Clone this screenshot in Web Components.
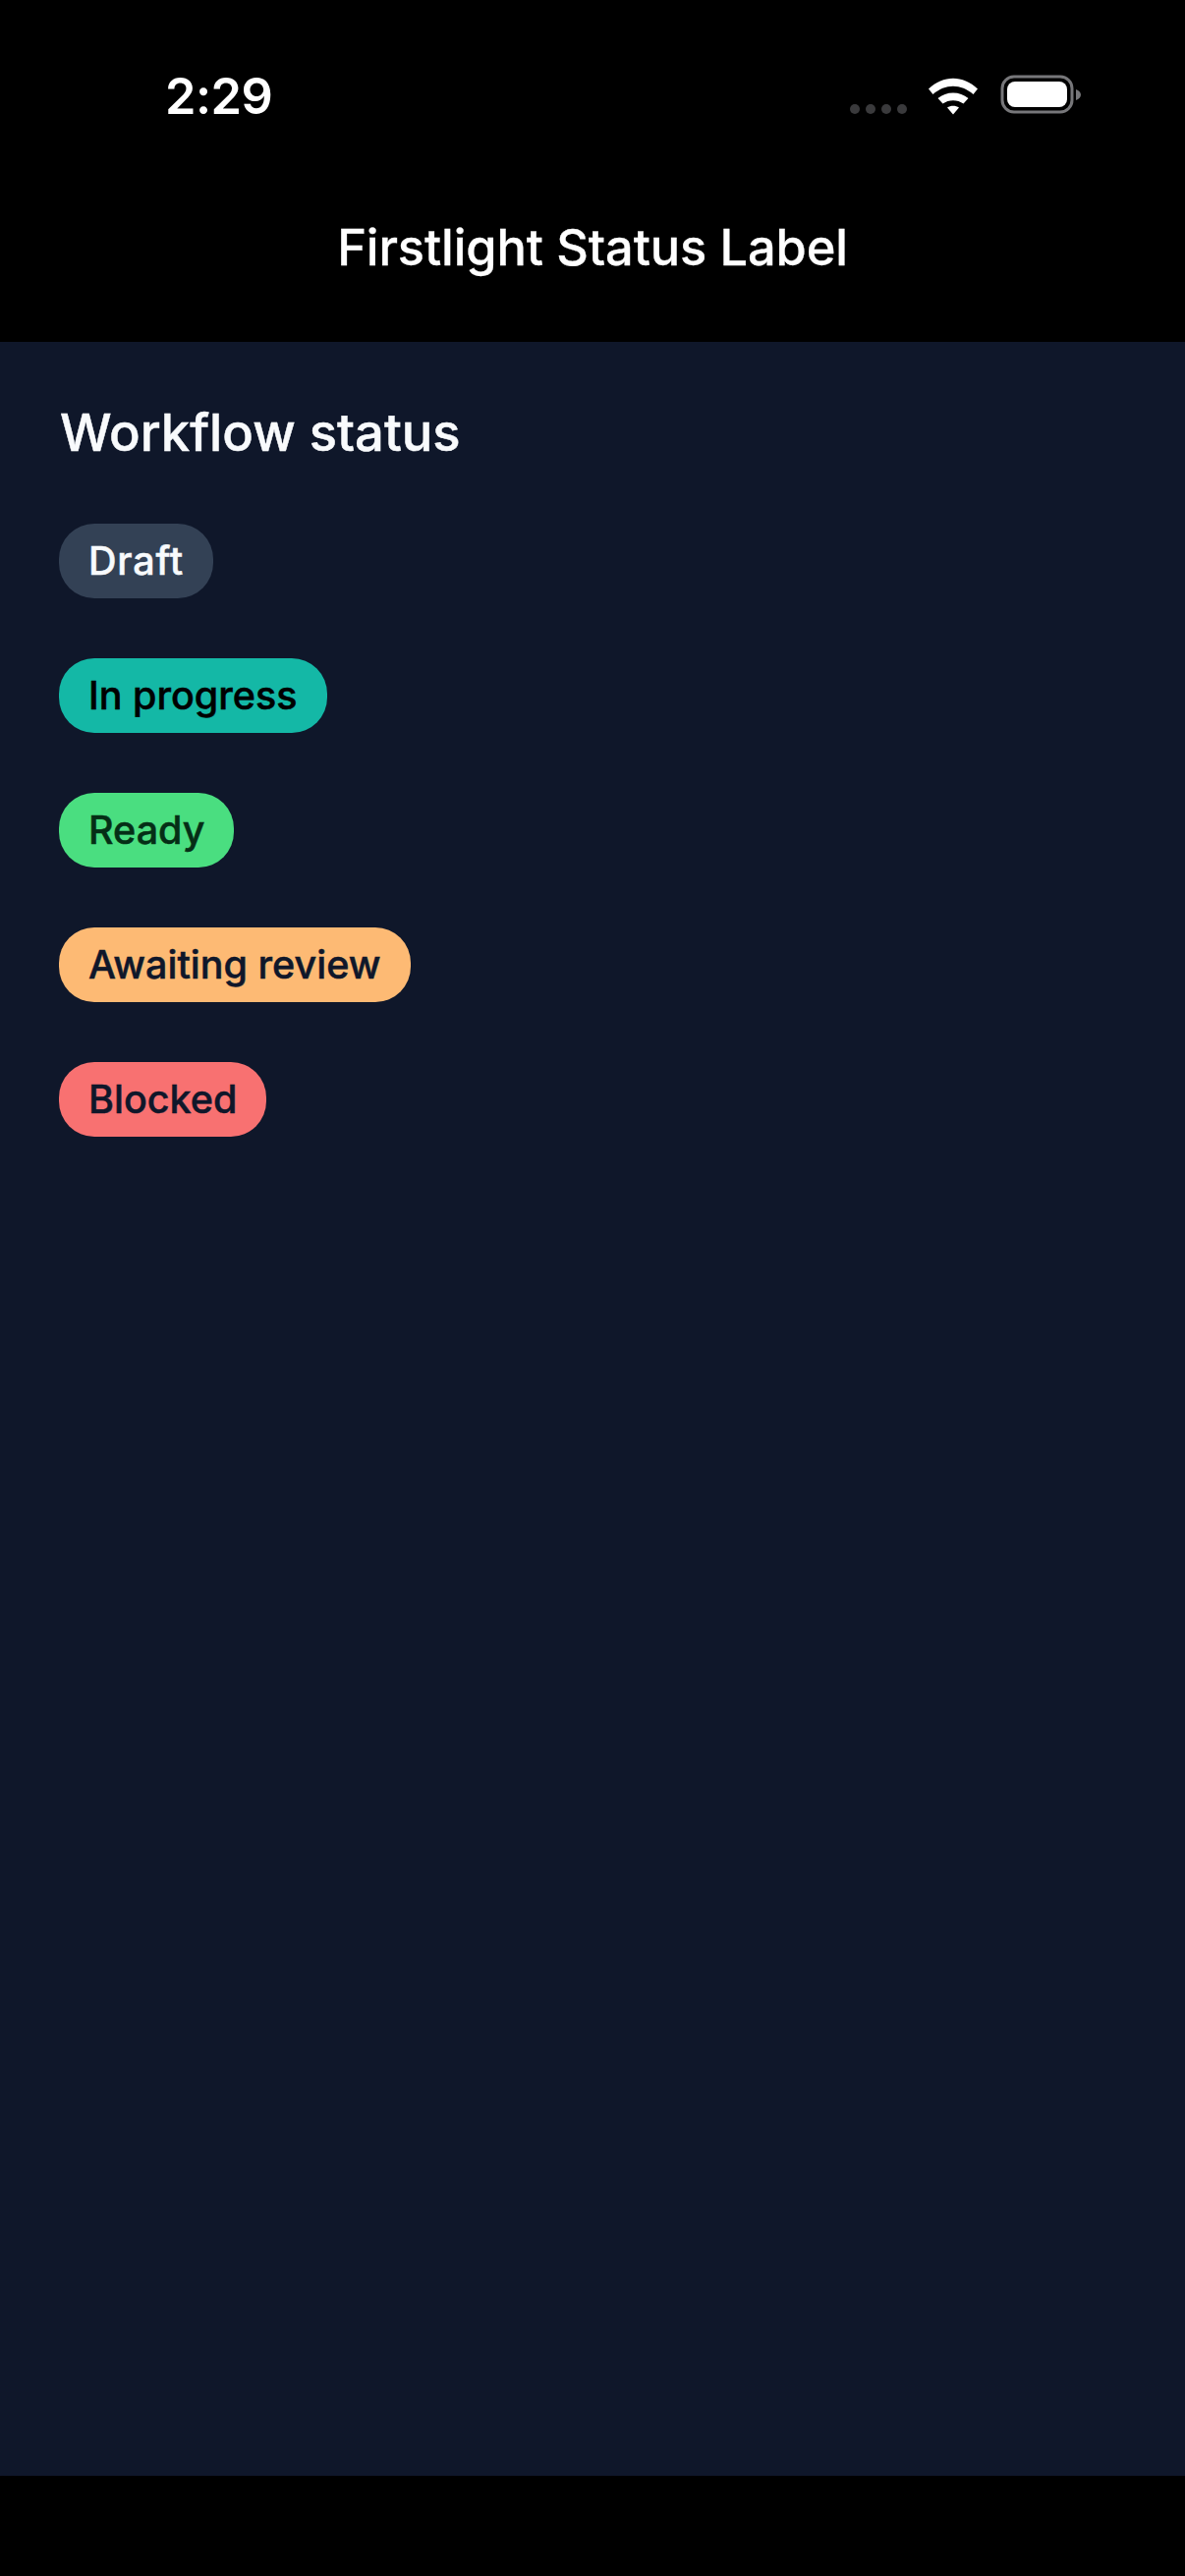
<!DOCTYPE html>
<html lang="en"><head><meta charset="utf-8"><title>Firstlight Status Label</title>
<style>
html,body{margin:0;padding:0;background:#000;}
body{width:1206px;height:2622px;overflow:hidden;font-family:Inter,"Noto Sans",sans-serif;display:flex;flex-direction:column;}
</style></head><body>
<app-statusbar time="2:29"></app-statusbar>
<app-header>Firstlight Status Label</app-header>
<app-content>
  <section-title>Workflow status</section-title>
  <status-pill bg="#334155" fg="#f8fafc" style="letter-spacing:.8px">Draft</status-pill>
  <status-pill bg="#14b8a6" fg="#000000">In progress</status-pill>
  <status-pill bg="#4ade80" fg="#052e16">Ready</status-pill>
  <status-pill bg="#fdba74" fg="#0f172a">Awaiting review</status-pill>
  <status-pill bg="#f87171" fg="#0f172a">Blocked</status-pill>
</app-content>
<app-footer></app-footer>
<script>
function def(name, html, init){
  customElements.define(name, class extends HTMLElement{
    constructor(){super();this.attachShadow({mode:'open'}).innerHTML=html;}
    connectedCallback(){ if(init) init(this); }
  });
}
def('app-statusbar',`<style>
:host{display:flex;flex:none;height:180px;box-sizing:border-box;background:#000;color:#fff;position:relative}
.t{position:absolute;left:168px;top:67px;font:600 50.500px/62px Inter,sans-serif;letter-spacing:-.5px}
.r{position:absolute;left:864px;top:76px;display:block}
</style><div class="t" id="t"></div>
<svg class="r" width="240" height="44" viewBox="0 0 240 44">
  <g fill="#3a3a3c"><circle cx="6" cy="35" r="5"/><circle cx="22" cy="35" r="5"/><circle cx="38" cy="35" r="5"/><circle cx="54" cy="35" r="5"/></g>
  <g fill="#fff">
    <path d="M81 12.5 C96 -2 116 -2 131 12.500 L126.500 18 C114 7 98 7 85.500 18 Z" transform="translate(0,2)"/>
    <path d="M90.500 23 C99 15.500 113 15.500 121.500 23 L116.500 28.500 C110.500 24 101.500 24 95.500 28.500 Z" transform="translate(0,1)"/>
    <path d="M100 34 C103.500 31.500 108.500 31.500 112 34 L106 41 Z" transform="translate(0,-0.500)"/>
  </g>
  <rect x="156" y="2" width="71" height="36" rx="12" fill="none" stroke="#77777a" stroke-width="3"/>
  <rect x="161" y="7" width="61" height="26" rx="8" fill="#fff"/>
  <path d="M231 15 C234 16 236 18 236 20.500 C236 23 234 25 231 26 Z" fill="#77777a"/>
</svg>`, el=>{el.shadowRoot.getElementById('t').textContent=el.getAttribute('time');});
def('app-header',`<style>
:host{display:flex;flex:none;justify-content:center;height:168px;box-sizing:border-box;padding-top:42px;background:#000;color:#fff;font:500 50.500px/60px Inter,sans-serif;letter-spacing:-.1px;-webkit-text-stroke:.3px currentColor}
</style><slot></slot>`);
def('app-content',`<style>
:host{display:flex;flex:1 1 auto;flex-direction:column;align-items:flex-start;box-sizing:border-box;background:#0f172a;padding:60px 60px 0;gap:61px}
</style><slot></slot>`);
def('app-footer',`<style>:host{display:block;flex:none;height:102px;background:#000}</style>`);
def('section-title',`<style>
:host{display:block;color:#f8fafc;font:500 52.500px/64px Inter,sans-serif;margin-left:1px;-webkit-text-stroke:.5px currentColor}
</style><slot></slot>`);
def('status-pill',`<style>
:host{display:inline-flex;align-items:center;height:76px;box-sizing:border-box;padding:0 30px;border-radius:36px;font:500 39.500px/48px Inter,sans-serif;background:var(--bg);color:var(--fg);-webkit-text-stroke:.5px currentColor}
</style><slot></slot>`, el=>{el.style.setProperty('--bg',el.getAttribute('bg'));el.style.setProperty('--fg',el.getAttribute('fg'));});
</script>
</body></html>
